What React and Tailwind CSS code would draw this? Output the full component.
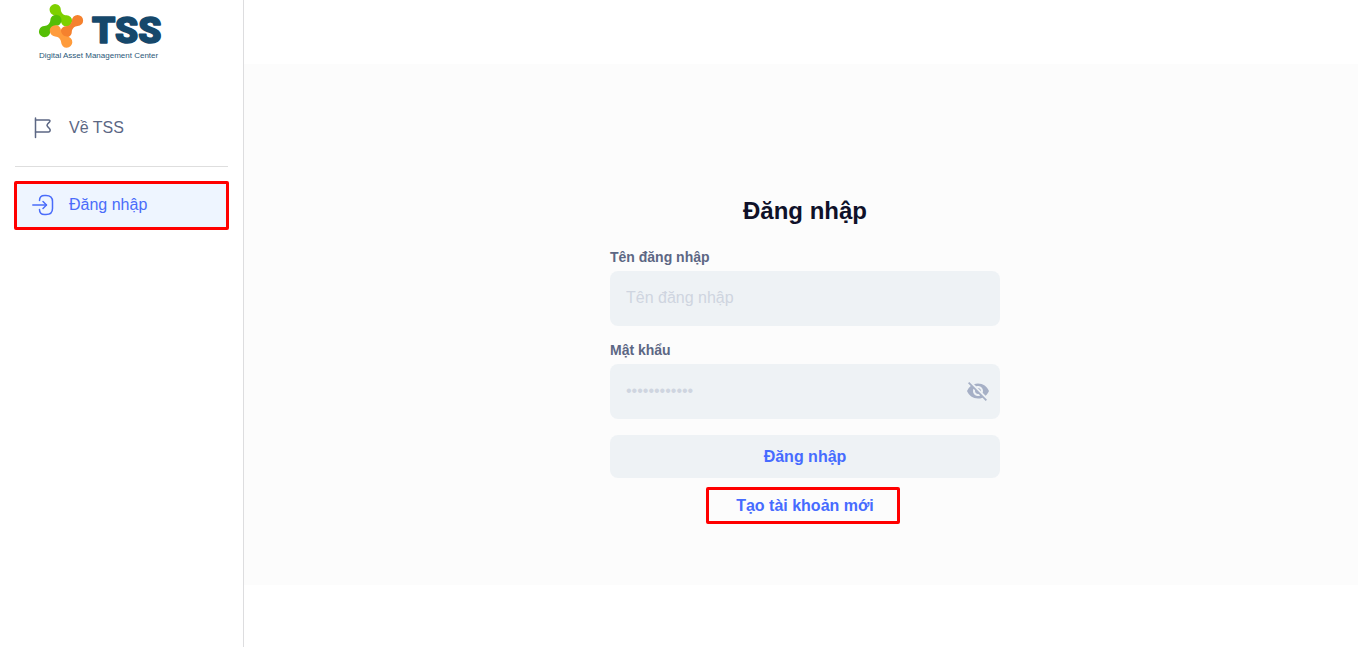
import React, { useState } from "react";
import { MdVisibility, MdVisibilityOff } from "react-icons/md";

const link = "M-5.6 0 A5.6 5.6 0 0 1 3.8 -4.100 C6 -1.900 10 -1.900 12.200 -4.100 A5.6 5.6 0 1 1 12.200 4.100 C10 1.900 6 1.900 3.8 4.100 A5.6 5.6 0 0 1 -5.6 0 Z";

const Logo = () => (
  <svg width="128" height="60" viewBox="0 0 128 60" role="img" aria-label="TSS">
    <path d={link} transform="translate(17.2 9.6) rotate(45)" fill="#7ed000" />
    <path d={link} transform="translate(6.6 31.6) rotate(-45)" fill="#55be06" />
    <path d={link} transform="translate(28.2 31.8) rotate(-45)" fill="#f5812e" />
    <path d={link} transform="translate(17.4 30.8) rotate(45)" fill="#ff9c3c" />
    <text
      x="54"
      y="43"
      fontSize="37"
      fontWeight="900"
      fontFamily="Roboto, sans-serif"
      fill="#16486b"
      stroke="#16486b"
      strokeWidth="1.6"
      strokeLinejoin="round"
    >
      TSS
    </text>
    <text x="1" y="58" fontSize="8" fontFamily="'Liberation Sans', Arial, sans-serif" fill="#2b5878">
      Digital Asset Management Center
    </text>
  </svg>
);

const FlagIcon = () => (
  <svg width="24" height="24" viewBox="0 0 24 24" fill="none" stroke="currentColor" strokeWidth="1.5" strokeLinecap="round" strokeLinejoin="round">
    <path d="M4.500 2v19.500" />
    <path d="M4.500 4h13c1.600 0 1.900.9 1 1.900l-1.900 2.100c-.9 1-.9 1.700 0 2.600l2 2.100c1 1.100.7 3.300-1.100 3.300H4.500" />
  </svg>
);

const LoginIcon = () => (
  <svg width="24" height="24" viewBox="0 0 24 24" fill="none" stroke="currentColor" strokeWidth="1.5" strokeLinecap="round" strokeLinejoin="round">
    <path d="M1.800 12h13.500" />
    <path d="M12 8.500 15.500 12 12 15.500" />
    <path d="M8.500 7.500C8.500 4.300 10.700 2.500 13.500 2.500h1.500c3.900 0 6.500 2 6.500 6v7c0 4-2.600 6-6.500 6h-1.500c-2.800 0-5-1.700-5-5" />
  </svg>
);

const App = () => {
  const [showPassword, setShowPassword] = useState(false);

  return (
    <div className="flex min-h-screen bg-white font-['Liberation_Sans',Arial,sans-serif] text-base">
      {/* Sidebar */}
      <aside className="w-61 shrink-0 border-r border-[#dddddf]">
        <a href="#" className="block pl-[38px]">
          <Logo />
        </a>
        <nav className="px-3.5 pt-[43px]">
          <a href="#about" className="flex h-[49px] items-center gap-3.5 px-[17px] text-[#5c6784]">
            <FlagIcon />
            <span>Về TSS</span>
          </a>
          <hr className="mx-px my-3.5 border-[#dedede]" />
          <a
            href="#login"
            className="flex h-[49px] items-center gap-3.5 rounded-xs border-3 border-[#ff0000] bg-[#eef5ff] px-3.5 pb-0.5 text-[#4a6cfa]"
          >
            <LoginIcon />
            <span>Đăng nhập</span>
          </a>
        </nav>
      </aside>

      {/* Content */}
      <main className="flex flex-1 flex-col pt-16 pb-[62px]">
        <section className="flex-1 bg-[#fcfcfc] pt-[131px] pl-2">
          <form className="mx-auto flex w-full max-w-[390px] flex-col" onSubmit={(e) => e.preventDefault()}>
            <h1 className="text-center text-2xl font-bold text-[#0f1129]">Đăng nhập</h1>

            <label htmlFor="username" className="mt-5 text-sm font-bold text-[#5c6784]">
              Tên đăng nhập
            </label>
            <input
              id="username"
              type="text"
              placeholder="Tên đăng nhập"
              className="mt-1 h-[55px] rounded-lg bg-[#eef2f5] px-4 pb-0.5 text-[#5c6784] outline-none placeholder:text-[#cfd5e0]"
            />

            <label htmlFor="password" className="mt-3.5 text-sm font-bold text-[#5c6784]">
              Mật khẩu
            </label>
            <div className="mt-1 flex h-[55px] items-center rounded-lg bg-[#eef2f5] pr-2.5 pb-0.5 pl-4">
              <input
                id="password"
                type={showPassword ? "text" : "password"}
                placeholder="••••••••••••"
                className="min-w-0 flex-1 bg-transparent text-[#5c6784] outline-none placeholder:text-[#cfd5e0]"
              />
              <button
                type="button"
                aria-label="Hiện mật khẩu"
                className="text-[#a6b0c6]"
                onClick={() => setShowPassword(!showPassword)}
              >
                {showPassword ? <MdVisibility size={24} /> : <MdVisibilityOff size={24} />}
              </button>
            </div>

            <button type="submit" className="mt-4 h-[43px] rounded-lg bg-[#eef2f5] font-bold text-[#466bff]">
              Đăng nhập
            </button>
            <a
              href="#register"
              className="mt-[9px] mr-1 flex h-[37px] w-[194px] items-center justify-center self-center rounded-xs border-3 border-[#ff0000] pl-1 font-bold text-[#466bff]"
            >
              Tạo tài khoản mới
            </a>
          </form>
        </section>
      </main>
    </div>
  );
};

export default App;
